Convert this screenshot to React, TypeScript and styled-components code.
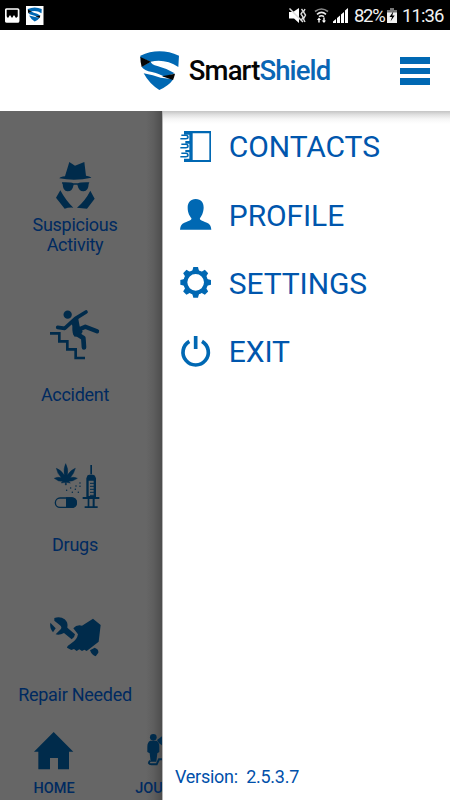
import React from "react";
import styled, { createGlobalStyle } from "styled-components";

const BLUE = "#0068b3";
const DIM = "#002b4b";

const GlobalStyle = createGlobalStyle`
  *, *::before, *::after { box-sizing: border-box; }
  body { margin: 0; font-family: Roboto, "Liberation Sans", sans-serif; background: #000; }
  svg { display: block; flex: none; }
`;

const Screen = styled.div`
  width: 450px;
  height: 800px;
  display: flex;
  flex-direction: column;
  overflow: hidden;
  background: #fff;
`;

const StatusBar = styled.div`
  height: 30px;
  flex: none;
  background: #000;
  display: flex;
  align-items: center;
  justify-content: space-between;
  padding: 0 6px 0 5px;
`;

const StatusGroup = styled.div`
  display: flex;
  align-items: center;
  height: 30px;
`;

const StatusText = styled.span<{ $width: number; $gap: number; $track: number }>`
  color: #f2f2f2;
  width: ${(p) => p.$width}px;
  font-size: 18.5px;
  line-height: 30px;
  margin-left: ${(p) => p.$gap}px;
  letter-spacing: ${(p) => p.$track}px;
  padding-top: 2px;
  white-space: nowrap;
`;

const Header = styled.header`
  height: 81px;
  flex: none;
  background: #fff;
  display: flex;
  align-items: center;
  justify-content: space-between;
  padding: 0 20px 0 140px;
`;

const Brand = styled.div`
  display: flex;
  align-items: center;
  gap: 9.5px;
`;

const BrandName = styled.div`
  padding-top: 2px;
  white-space: nowrap;
`;

const Wordmark = styled.span<{ $accent?: boolean }>`
  color: ${(p) => (p.$accent ? "#0a66b4" : "#050505")};
  font-size: 27.5px;
  font-weight: 500;
  line-height: 32px;
  letter-spacing: -0.88px;
`;

const MenuButton = styled.button`
  display: flex;
  flex-direction: column;
  gap: 4px;
  width: 30px;
  padding: 1px 0 0;
  border: 0;
  background: none;
`;

const MenuBar = styled.span`
  height: 6.5px;
  background: ${BLUE};
`;

const Body = styled.main`
  flex: 1;
  min-height: 0;
  display: flex;
`;

const Dimmed = styled.section`
  width: 162px;
  flex: none;
  overflow: hidden;
  background: linear-gradient(to right, transparent 146px, rgba(0, 0, 0, 0.07) 153px, rgba(0, 0, 0, 0.25) 162px), #666;
  display: flex;
  flex-direction: column;
`;

const Tile = styled.div<{ $height: number; $top: number }>`
  width: 150px;
  height: ${(p) => p.$height}px;
  padding-top: ${(p) => p.$top}px;
  flex: none;
  display: flex;
  flex-direction: column;
  align-items: center;
`;

const IconSlot = styled.div<{ $height: number }>`
  height: ${(p) => p.$height}px;
  display: flex;
  align-items: center;
`;

const TileLabel = styled.div`
  color: #002a60;
  font-size: 18px;
  letter-spacing: -0.28px;
  line-height: 20px;
  padding-top: 1px;
  text-align: center;
`;

const Nav = styled.nav`
  display: flex;
  height: 74px;
  flex: none;
`;

const NavItem = styled.div<{ $width: number }>`
  width: ${(p) => p.$width}px;
  flex: none;
  display: flex;
  flex-direction: column;
  align-items: center;
  gap: 11px;
`;

const NavLabel = styled.span`
  color: #002a60;
  font-size: 14.5px;
  font-weight: 500;
  line-height: 18px;
`;

const Drawer = styled.aside`
  flex: 1;
  border-left: 1px solid #b5b5b5;
  background: linear-gradient(to bottom, #c4c4c4 0, #e2e2e2 4px, #f6f6f6 8px, #fff 13px);
  display: flex;
  flex-direction: column;
  justify-content: space-between;
`;

const MenuList = styled.div`
  display: flex;
  flex-direction: column;
  padding-top: 1px;
`;

const MenuRow = styled.div`
  height: 68.4px;
  display: flex;
  align-items: center;
  padding-left: 17px;
`;

const MenuText = styled.span`
  color: #0056ad;
  font-size: 30px;
  letter-spacing: -0.1px;
  line-height: 36px;
  margin-left: 17.5px;
  padding-top: 2px;
`;

const Version = styled.div`
  color: #0050aa;
  font-size: 18px;
  letter-spacing: -0.27px;
  line-height: 22px;
  padding: 0 0 12px 12px;
  white-space: pre;
`;

type GlyphProps = { box: [number, number, number, number]; color?: string; children: React.ReactNode };

/* Icons are drawn on a grid of three units to the pixel. */
const Glyph = ({ box, color = BLUE, children }: GlyphProps) => (
  <svg width={box[2] / 3} height={box[3] / 3} viewBox={box.join(" ")} fill={color} overflow="visible">
    {children}
  </svg>
);

const ShieldShapes = ({ dark = "#050505" }: { dark?: string }) => (
  <>
    <path d="M31 46Q88 20 147 46L145 80Q106 54 62 64L31 52Z" />
    <path d="M62 64Q64 72 82 77Q110 84 134 99L104 110Q90 101 66 95Q42 91 35 79Z" />
    <path d="M41 99Q70 104 92 112L130 117Q115 138 88 149Q58 131 41 99Z" />
    <path d="M31 50L63 64L35 80Q31 66 31 50Z" fill={dark} />
    <path d="M96 108L135 100Q133 110 129 119Z" fill={dark} />
  </>
);

const SpyIcon = () => (
  <Glyph box={[108, 38, 116, 140]} color={DIM}>
    <path d="M148 38L165 49L193 38L198 79Q213 82 214 85Q167 96 118 87Q121 82 135 81Z" />
    <path d="M126 99Q152 98 160 102H174Q182 98 208 99L206 104Q205 126 191 126Q177 127 172 106H161Q157 127 142 126Q129 126 128 104L126 102Z" />
    <path d="M121 123Q138 155 160 175Q145 174 134 178L108 145Z" />
    <path d="M211 124L224 148L201 178L171 175Q196 154 211 124Z" />
  </Glyph>
);

const FallIcon = () => (
  <Glyph box={[60, 35, 148, 148]} color={DIM}>
    <circle cx="113" cy="49" r="12.5" />
    <path d="M60 105H88V129H112V153H137V179H165" fill="none" stroke={DIM} strokeWidth="8" />
    <g fill="none" stroke={DIM} strokeLinecap="round" strokeLinejoin="round">
      <path d="M168 41L136 61L104 90L83 87" strokeWidth="11" />
      <path d="M138 97L166 85L201 99" strokeWidth="13" />
      <path d="M136 104L160 119L162 147" strokeWidth="14" />
    </g>
    <path d="M121 70L144 57L149 84L158 100L150 113L134 115Q126 108 127 82Z" />
  </Glyph>
);

const DrugsIcon = () => (
  <Glyph box={[66, 24, 139, 134]} color={DIM}>
    <path d="M107 26Q116 41 112 61Q123 44 136 40Q132 56 121 68Q132 65 142 70Q130 79 116 79L121 84L109 82V90H106V82L94 84L98 79Q84 80 73 70Q84 65 94 68Q82 56 79 40Q93 45 103 61Q100 40 107 26Z" stroke={DIM} strokeWidth="1.5" />
    <rect x="76" y="129" width="63" height="28" rx="14" fill="none" stroke={DIM} strokeWidth="4" />
    <path d="M108 127H126Q141 128 141 143Q141 158 126 159H108Z" />
    <path d="M181 30H186V58H181ZM171 65Q171 59 178 59H189Q196 60 196 65L198 70V127H169V70ZM176 77V123H191V77Z" fillRule="evenodd" />
    <path d="M158 126H208V132H158ZM173 132H178V156H173ZM188 132H194V156H188ZM164 154H203V159H164Z" />
    <path d="M180 85H192M180 94H192M180 103H192M180 112H192M180 121H192" stroke={DIM} strokeWidth="3" />
    <g>
      <circle cx="150" cy="84" r="2.2" />
      <circle cx="138" cy="93" r="2.2" />
      <circle cx="150" cy="94" r="2.2" />
      <circle cx="122" cy="99" r="2.2" />
      <circle cx="110" cy="106" r="2.2" />
      <circle cx="136" cy="103" r="2.2" />
      <circle cx="127" cy="112" r="2.2" />
      <circle cx="145" cy="112" r="2.2" />
    </g>
  </Glyph>
);

const RepairIcon = () => (
  <Glyph box={[120, 24, 152, 118]} color={DIM}>
    <path d="M133 27Q151 21 164 31Q175 40 172 56L195 76Q194 86 185 91L162 72Q149 79 137 76L152 61Q157 55 150 49L133 35Z" />
    <path d="M121 41L137 58L129 70Q118 56 121 41Z" />
    <path d="M190 58Q200 46 216 50L249 29L272 48L266 98L237 121L230 126L223 122L216 126L208 121L200 126L192 120L184 123L171 116L173 111L190 98Q201 91 204 76Z" />
    <path d="M240 124L254 116Q267 121 265 131L257 142Q246 139 240 124Z" />
  </Glyph>
);

const HomeIcon = () => (
  <Glyph box={[102, 38, 118, 112]} color={DIM}>
    <path d="M161 38L220 97H207V150H174V116H150V150H115V97H102Z" />
  </Glyph>
);

const JournalIcon = () => (
  <Glyph box={[444, 38, 122, 112]} color={DIM}>
    <circle cx="463" cy="54" r="10" />
    <path d="M454 64H472Q481 68 481 82V98L475 102L472 127H455L452 102L445 98V82Q445 68 454 64Z" />
    <path d="M474 62L490 50V78Q478 74 474 62Z" />
    <path d="M454 124Q444 134 458 135H473L480 120H525" fill="none" stroke={DIM} strokeWidth="6" />
  </Glyph>
);

const ContactsIcon = () => (
  <Glyph box={[30, 30, 94, 94]}>
    <path d="M42 30H123V123H42V113H58V94H46V87H58V68H46V60H58V41H42ZM68 37V117H118V37Z" fillRule="evenodd" />
    <path d="M34 43H47Q54 43 54 48.500Q54 53 47 53H31M34 70H47Q54 70 54 75.500Q54 80 47 80H31M34 97H47Q54 97 54 102.500Q54 107 47 107H31" fill="none" stroke={BLUE} strokeWidth="4.500" />
  </Glyph>
);

const ProfileIcon = () => (
  <Glyph box={[30, 236, 94, 92]}>
    <path d="M77 236C94 236 101 247 101 262C100 279 94 288 90 293C88 299 94 301 111 307Q123 311 124 328H30Q31 311 43 307C60 301 66 299 64 293C60 288 53 279 53 262C53 247 61 236 77 236Z" />
  </Glyph>
);

const GearIcon = () => (
  <Glyph box={[30, 36, 94, 93]}>
    <circle cx="77" cy="82" r="31" fill="none" stroke={BLUE} strokeWidth="12" />
    {[0, 45, 90, 135, 180, 225, 270, 315].map((a) => (
      <path key={a} d="M66 51L70 36H84L88 51Z" transform={`rotate(${a} 77 82)`} />
    ))}
  </Glyph>
);

const PowerIcon = () => (
  <Glyph box={[30, 240, 94, 93]}>
    <path d="M58 256A38 38 0 1 0 96 256" fill="none" stroke={BLUE} strokeWidth="11" />
    <rect x="71.5" y="240" width="11" height="39" />
  </Glyph>
);

const NotificationIcons = () => (
  <svg width="42" height="30" viewBox="5 0 42 30">
    <rect x="5.8" y="9" width="12.8" height="13" rx="1" fill="none" stroke="#fff" strokeWidth="1.7" />
    <path d="M6 22V16L8 18L10 15L12 18L14 15L16 18L18.5 16V22Z" fill="#fff" />
    <rect x="26" y="6" width="17.5" height="19" fill="#fff" />
    <g transform="translate(24.1 3.6) scale(.12)" fill={BLUE}>
      <ShieldShapes />
    </g>
  </svg>
);

const SystemIcons = () => (
  <svg width="61" height="30" viewBox="288 0 61 30" fill="#fff">
    <path d="M289 12H293L299 8V23L294 18.5H289Z" />
    <path d="M289.500 8.500L303 22" stroke="#ddd" strokeWidth="1.5" />
    <path d="M301.500 9L303 11L301 14L303 17L301.500 20M305 9L303.500 12L305.500 15L303.500 19L305 22" fill="none" stroke="#ddd" strokeWidth="1.4" />
    <g fill="none" stroke="#eee" strokeWidth="1.6">
      <path d="M315 11.5Q321.5 6.5 328 11.5" stroke="#888" />
      <path d="M317 14.3Q321.5 10.5 326 14.3" />
      <path d="M319 16.7Q321.5 14.8 324 16.7" />
    </g>
    <path d="M317 20L319 17.500L321 20H319.700V22.500H318.300V20ZM321.800 20.500H323.300V17.500H324.700V20.500H326L324 23Z" />
    <path d="M333 23V21.5L336 19V23ZM337 23V18L340 15.5V23ZM341 23V14.5L344 12V23ZM345 23V10.5L348 8V23Z" />
  </svg>
);

const BatteryIcon = () => (
  <svg width="10" height="30" viewBox="388 0 10 30">
    <path d="M388 10H391V8H395V10H398V13H388Z" fill="#777" />
    <rect x="388" y="12.5" width="10" height="10.5" fill="#f2f2f2" />
    <path d="M394.5 11L390.5 17H393L391.5 21.5L395.7 15.5H393.3Z" fill="#000" />
  </svg>
);

const tiles = [
  { label: <>Suspicious<br />Activity</>, icon: <SpyIcon />, height: 174, top: 45, slot: 58 },
  { label: "Accident", icon: <FallIcon />, height: 150, top: 1, slot: 98 },
  { label: "Drugs", icon: <DrugsIcon />, height: 150, top: 1, slot: 98 },
  { label: "Repair Needed", icon: <RepairIcon />, height: 147, top: 5, slot: 94 },
];

const menu = [
  { label: "CONTACTS", icon: <ContactsIcon /> },
  { label: "PROFILE", icon: <ProfileIcon /> },
  { label: "SETTINGS", icon: <GearIcon /> },
  { label: "EXIT", icon: <PowerIcon /> },
];

export default function App() {
  return (
    <>
      <GlobalStyle />
      <Screen>
        <StatusBar>
          <NotificationIcons />
          <StatusGroup>
            <SystemIcons />
            <StatusText $width={33} $gap={5} $track={-1.3}>82%</StatusText>
            <BatteryIcon />
            <StatusText $width={42} $gap={5} $track={-0.9}>11:36</StatusText>
          </StatusGroup>
        </StatusBar>
        <Header>
          <Brand>
            <Glyph box={[30, 32, 118, 118]}>
              <ShieldShapes />
            </Glyph>
            <BrandName>
              <Wordmark>Smart</Wordmark>
              <Wordmark $accent>Shield</Wordmark>
            </BrandName>
          </Brand>
          <MenuButton aria-label="Menu">
            <MenuBar />
            <MenuBar />
            <MenuBar />
          </MenuButton>
        </Header>
        <Body>
          <Dimmed>
            {tiles.map((t, i) => (
              <Tile key={i} $height={t.height} $top={t.top}>
                <IconSlot $height={t.slot}>{t.icon}</IconSlot>
                <TileLabel>{t.label}</TileLabel>
              </Tile>
            ))}
            <Nav>
              <NavItem $width={108}>
                <HomeIcon />
                <NavLabel>HOME</NavLabel>
              </NavItem>
              <NavItem $width={119}>
                <JournalIcon />
                <NavLabel>JOURNAL</NavLabel>
              </NavItem>
            </Nav>
          </Dimmed>
          <Drawer>
            <MenuList>
              {menu.map((m) => (
                <MenuRow key={m.label}>
                  {m.icon}
                  <MenuText>{m.label}</MenuText>
                </MenuRow>
              ))}
            </MenuList>
            <Version>{"Version:  2.5.3.7"}</Version>
          </Drawer>
        </Body>
      </Screen>
    </>
  );
}
